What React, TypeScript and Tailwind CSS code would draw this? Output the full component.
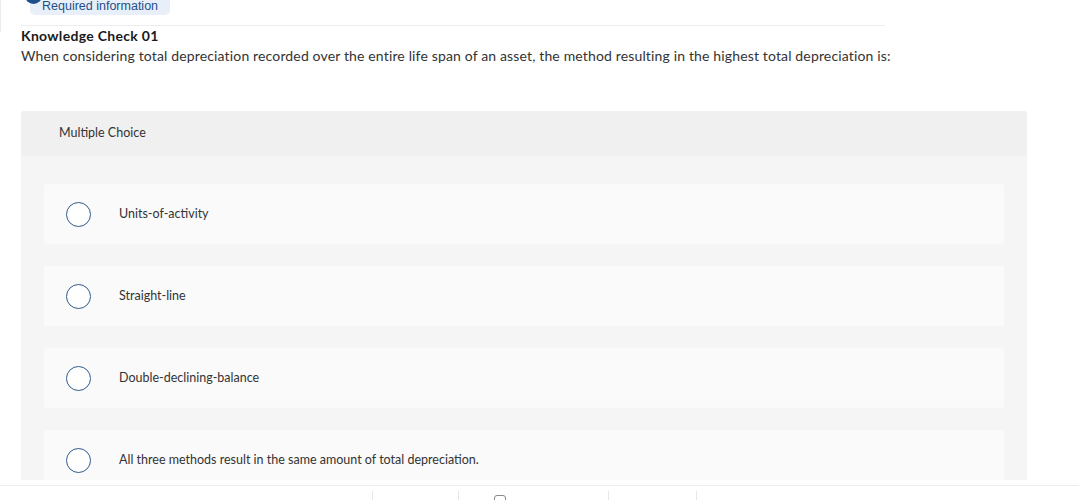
import React from "react";

const options = [
  "Units-of-activity",
  "Straight-line",
  "Double-declining-balance",
  "All three methods result in the same amount of total depreciation.",
];

export default function App() {
  return (
    <div className="relative h-[500px] w-full overflow-hidden bg-white font-['Lato',sans-serif] text-[#333]">
      {/* left panel edge */}
      <div className="absolute left-0 top-0 h-[32px] w-px bg-[#ececec]" />

      <div className="pl-[21px]">
        <div className="relative h-[25px]">
          <div className="absolute left-[9px] top-0 flex h-[15px] items-end rounded-b-[5px] bg-[#e9eff8] px-[12px] pb-[3px] font-['Liberation_Sans',Arial,sans-serif] text-[12.5px] leading-none text-[#1d4f8b]">
            Required information
          </div>
          <span className="absolute left-[4px] top-[-13px] z-10 h-[17px] w-[17px] rounded-full bg-[#1d4f8b]" />
        </div>
        <div className="w-[864px] border-t border-[#ededed]" />
        <h2 className="mt-[2px] text-[14px] font-bold leading-[16px] tracking-[0.3px] text-[#1a1a1a]">Knowledge Check 01</h2>
        <p className="mt-[4px] text-[14px] leading-[16px] tracking-[0.15px] text-[#333]">
          When considering total depreciation recorded over the entire life span of an asset, the method resulting in the highest total depreciation is:
        </p>
      </div>

      <div className="mx-[21px] mt-[47px] h-[369px] w-[1006px] overflow-hidden rounded-t-[3px] bg-[#f5f5f5]">
        <div className="flex h-[45px] items-center bg-[#f0f0f0] px-[38px] text-[12.5px] text-[#333]">
          Multiple Choice
        </div>
        <div className="flex flex-col gap-[22px] px-[23px] pt-[28px]">
          {options.map((o) => (
            <div key={o} className="flex h-[60px] shrink-0 items-center rounded-[3px] bg-[#fafafa]">
              <span className="ml-[22px] h-[25px] w-[25px] shrink-0 rounded-full border-[1.5px] border-[#2f5b8c] bg-white" />
              <span className="ml-[28px] text-[12.5px] text-[#333]">{o}</span>
            </div>
          ))}
        </div>
      </div>

      <div className="mt-[5px] flex h-[20px] border-t border-[#ececec]">
        <div className="ml-[372px] mt-[5px] h-full w-px bg-[#e6e6e6]" />
        <div className="ml-[85px] mt-[5px] h-full w-px bg-[#e6e6e6]" />
        <div className="ml-[35px] mt-[9px] h-[8px] w-[12px] rounded-t-[3px] border border-[#888]" />
        <div className="ml-[102px] mt-[5px] h-full w-px bg-[#e6e6e6]" />
        <div className="ml-[87px] mt-[5px] h-full w-px bg-[#e6e6e6]" />
      </div>
    </div>
  );
}
